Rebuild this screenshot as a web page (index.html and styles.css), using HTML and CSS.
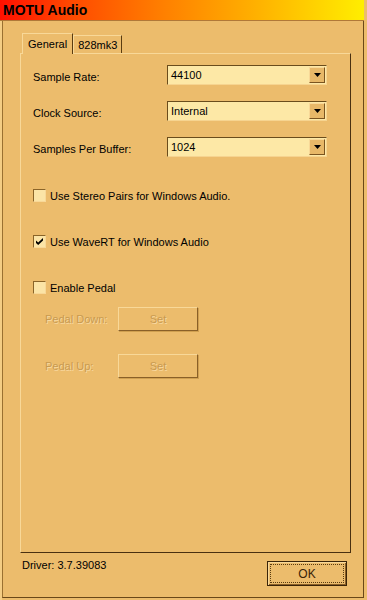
FILE: index.html
```html
<!DOCTYPE html>
<html>
<head>
<meta charset="utf-8">
<link rel="stylesheet" href="styles.css">
</head>
<body>
<div class="window">
  <div class="titlebar"><span class="title">MOTU Audio</span></div>
  <div class="body">
    <div class="tabs">
      <div class="tab active">General</div>
      <div class="tab">828mk3</div>
    </div>
    <div class="panel">
      <div class="fields">
        <div class="field">
          <span class="label">Sample Rate:</span>
          <div class="combo"><span class="value">44100</span><span class="arrow"><svg width="7" height="4" viewBox="0 0 7 4"><path d="M0 0H7L3.5 4Z" fill="#000"/></svg></span></div>
        </div>
        <div class="field">
          <span class="label">Clock Source:</span>
          <div class="combo"><span class="value">Internal</span><span class="arrow"><svg width="7" height="4" viewBox="0 0 7 4"><path d="M0 0H7L3.5 4Z" fill="#000"/></svg></span></div>
        </div>
        <div class="field">
          <span class="label">Samples Per Buffer:</span>
          <div class="combo"><span class="value">1024</span><span class="arrow"><svg width="7" height="4" viewBox="0 0 7 4"><path d="M0 0H7L3.5 4Z" fill="#000"/></svg></span></div>
        </div>
      </div>
      <div class="checks">
        <div class="check"><span class="box"></span><span>Use Stereo Pairs for Windows Audio.</span></div>
        <div class="check"><span class="box"><svg width="7" height="7" viewBox="0 0 7 7"><path d="M0 2.5L2.2 4.5L7 0V2.5L2.2 7L0 5Z" fill="#000"/></svg></span><span>Use WaveRT for Windows Audio</span></div>
        <div class="check"><span class="box"></span><span>Enable Pedal</span></div>
      </div>
      <div class="pedals">
        <div class="pedal"><span class="dlabel">Pedal Down:</span><div class="btn set"><span class="dlabel">Set</span></div></div>
        <div class="pedal"><span class="dlabel">Pedal Up:</span><div class="btn set"><span class="dlabel">Set</span></div></div>
      </div>
    </div>
    <div class="footer">
      <span class="driver">Driver: 3.7.39083</span>
      <div class="okbtn"><div class="focus">OK</div></div>
    </div>
  </div>
</div>
</body>
</html>
```
FILE: styles.css
```css
html, body {
  margin: 0;
  padding: 0;
  background: #ecbc6c;
}
body {
  font-family: "Liberation Sans", Arial, sans-serif;
  font-size: 11px;
  color: #000;
}
.window {
  width: 367px;
  height: 600px;
  box-sizing: border-box;
  background: #ecbc6c;
  border-left: 2px solid #f4cd84;
  display: flex;
  flex-direction: column;
  position: relative;
}
.window::after {
  content: "";
  position: absolute;
  left: 0;
  top: 21px;
  right: 3px;
  bottom: 2px;
  border-left: 1px solid #9a7030;
  border-right: 1px solid #6a4818;
  border-bottom: 1px solid #6a4818;
  pointer-events: none;
}
.titlebar {
  height: 20px;
  margin-left: -2px;
  margin-right: 3px;
  background: linear-gradient(to right, #ff1000 0%, #ff4a00 20%, #ff8000 45%, #ffb000 70%, #ffee00 100%);
  border-bottom: 1px solid #b07838;
  display: flex;
  align-items: center;
  padding-left: 3px;
}
.title {
  font-weight: bold;
  font-size: 14px;
  color: #000;
}
.body {
  flex: 1;
  display: flex;
  flex-direction: column;
  padding: 11px 15px 0 18px;
}
.tabs {
  display: flex;
  height: 21px;
  align-items: flex-end;
  padding-left: 2px;
}
.tab {
  height: 18px;
  line-height: 18px;
  padding: 0 4px;
  border-top: 1px solid #f8d898;
  border-left: 1px solid #f8d898;
  border-right: 1px solid #5a3c10;
  box-sizing: border-box;
}
.tab.active {
  height: 21px;
  line-height: 20px;
  padding: 0 5px;
  margin-bottom: -1px;
  background: #ecbc6c;
  position: relative;
  z-index: 1;
}
.panel {
  height: 500px;
  box-sizing: border-box;
  border-top: 1px solid #f8d898;
  border-left: 1px solid #f8d898;
  border-right: 1px solid #4a3010;
  border-bottom: 1px solid #4a3010;
  width: 331px;
  display: flex;
  flex-direction: column;
  padding: 11px 0 0 12px;
}
.fields {
  display: flex;
  flex-direction: column;
  gap: 16px;
}
.field {
  display: flex;
  align-items: center;
  height: 20px;
}
.label {
  width: 134px;
  padding-top: 4px;
}
.combo {
  width: 160px;
  height: 20px;
  box-sizing: border-box;
  background: #fde8a6;
  border-top: 1px solid #6a4c1c;
  border-left: 1px solid #6a4c1c;
  border-right: 1px solid #f6d490;
  border-bottom: 1px solid #f6d490;
  display: flex;
  align-items: center;
  justify-content: space-between;
  padding: 1px;
}
.value {
  padding-left: 2px;
}
.arrow {
  width: 16px;
  height: 16px;
  box-sizing: border-box;
  background: #e8b868;
  border-top: 1px solid #f8d898;
  border-left: 1px solid #f8d898;
  border-right: 1px solid #7a5420;
  border-bottom: 1px solid #7a5420;
  display: flex;
  align-items: center;
  justify-content: center;
}
.checks {
  display: flex;
  flex-direction: column;
  gap: 33px;
  margin-top: 32px;
}
.check {
  display: flex;
  align-items: center;
  gap: 4px;
  height: 13px;
}
.box {
  width: 13px;
  height: 13px;
  box-sizing: border-box;
  background: #fbe4a6;
  border-top: 1px solid #8a6428;
  border-left: 1px solid #8a6428;
  border-right: 1px solid #f8d898;
  border-bottom: 1px solid #f8d898;
  display: flex;
  align-items: center;
  justify-content: center;
}
.pedals {
  display: flex;
  flex-direction: column;
  gap: 23px;
  margin-top: 13px;
}
.pedal {
  display: flex;
  align-items: center;
  height: 24px;
}
.pedal > .dlabel {
  width: 73px;
  padding-left: 12px;
}
.dlabel {
  color: #c89a50;
  text-shadow: 1px 1px 0 #f8d8a0;
}
.btn {
  width: 80px;
  height: 24px;
  box-sizing: border-box;
  border-top: 1px solid #f8d898;
  border-left: 1px solid #f8d898;
  border-right: 1px solid #8a6028;
  border-bottom: 1px solid #8a6028;
  box-shadow: 1px 1px 0 #d0a050;
  display: flex;
  align-items: center;
  justify-content: center;
}
.footer {
  display: flex;
  justify-content: space-between;
  align-items: flex-start;
  padding-top: 5px;
  padding-right: 5px;
}
.driver {
  padding-left: 2px;
  padding-top: 1px;
}
.okbtn {
  width: 80px;
  height: 25px;
  box-sizing: border-box;
  border: 1px solid #3a2408;
  padding: 2px;
  margin-top: 3px;
  box-shadow: inset 1px 1px 0 #f8d898, inset -1px -1px 0 #8a6028;
}
.focus {
  height: 100%;
  box-sizing: border-box;
  border: 1px dotted #5a3c10;
  display: flex;
  align-items: center;
  justify-content: center;
  color: #3a2408;
  font-size: 12px;
}
```
